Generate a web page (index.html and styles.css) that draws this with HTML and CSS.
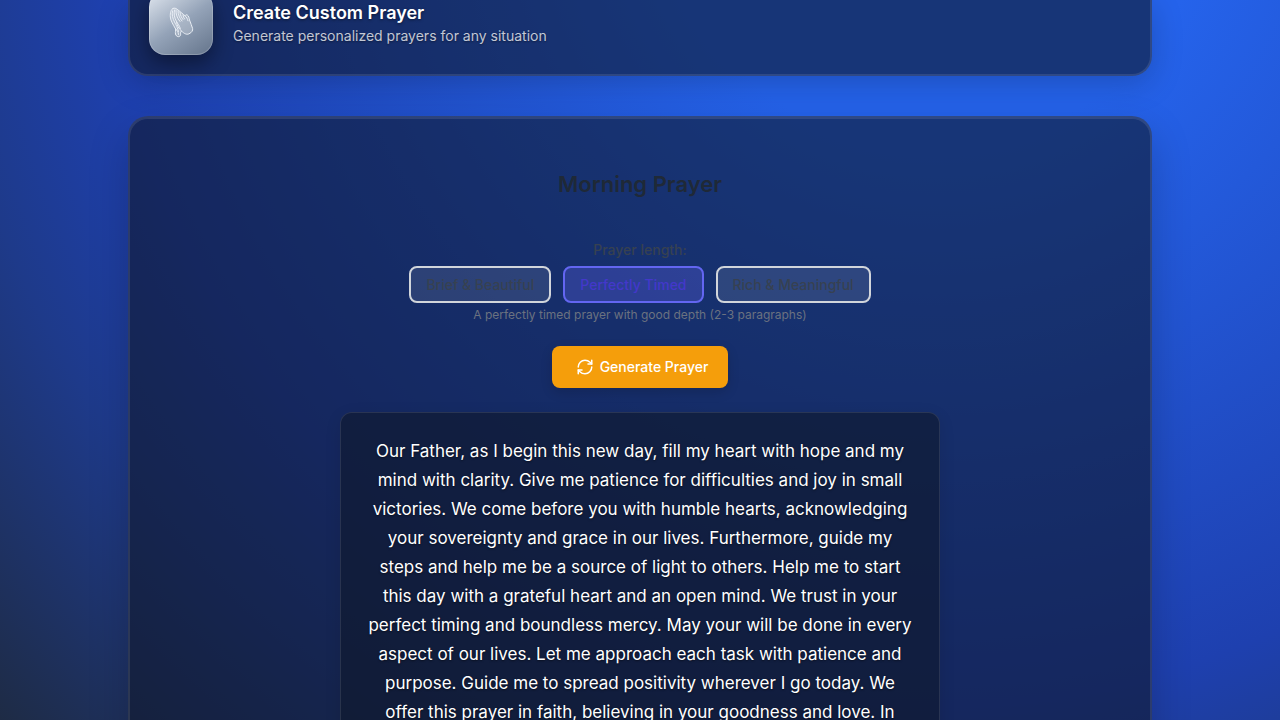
FILE: index.html
```html
<!DOCTYPE html>
<html lang="en">
<head>
<meta charset="utf-8">
<title>Morning Prayer</title>
<link rel="stylesheet" href="styles.css">
</head>
<body>
<main class="page">
  <section class="card feature">
    <div class="feature-icon">
      <svg viewBox="0 0 28 32" width="28" height="32" aria-hidden="true">
        <g fill="none" stroke="currentColor" stroke-width="1" stroke-linecap="round" stroke-linejoin="round">
          <path fill="rgba(255,255,255,.2)" d="M6 1.500C4 2 3 6 3.300 10c.3 4 3.200 8 5 11.500.8 2-.3 3.500.2 5.500.7 3 4 3.600 5 1.200.5-1.400-.6-2.600 1-4.200 2.500 2.500 5 4 7.500 2.800 3-1.400 4-3.400 3.600-5.300C25 19 23.500 16 22.500 13c-.4-1.800-.6-4-2.200-5-1.200-.6-1.600 0-2.300.8C16 7 12.500 4 10 2.200 8.500 1 7.500.8 6 1.500Z"/>
          <path d="M5.500 4c-.8 4 .2 7.500 2 11 1.600 3 3.200 6 4 9.500M7.500 3c-1 4 0 8 2 11.500 1.300 2.500 3 4 3.800 7M9 3c-.3 4 1 8 4 11.500M11 4c0 3.500 1.500 7 4 10M13 5.500c.3 2.500 1.400 5 3 7M16 8c.2 1.500.8 3 1.500 4"/>
          <path d="M9.500 14.500c.3 4 2.500 7.500 5 9.500M18 8.800c1.600 1.300 2.400 3 3 5M8.500 21.500c1.500 2 3 3.500 3 6"/>
        </g>
      </svg>
    </div>
    <div>
      <h2 class="feature-title">Create Custom Prayer</h2>
      <p class="feature-text">Generate personalized prayers for any situation</p>
    </div>
  </section>

  <section class="card prayer">
    <h1 class="prayer-title">Morning Prayer</h1>
    <div class="length" role="group" aria-labelledby="length-label">
      <span class="length-label" id="length-label">Prayer length:</span>
      <div class="length-options">
        <button class="option" type="button">Brief &amp; Beautiful</button>
        <button class="option option-selected" type="button" aria-pressed="true">Perfectly Timed</button>
        <button class="option" type="button">Rich &amp; Meaningful</button>
      </div>
      <p class="length-note">A perfectly timed prayer with good depth (2-3 paragraphs)</p>
    </div>
    <button class="generate" type="button">
      <svg viewBox="0 0 24 24" width="18" height="18" fill="none" stroke="currentColor" stroke-width="2" stroke-linecap="round" stroke-linejoin="round" aria-hidden="true"><path d="M3 12a9 9 0 0 1 9-9 9.750 9.750 0 0 1 6.740 2.740L21 8"/><path d="M21 3v5h-5"/><path d="M21 12a9 9 0 0 1-9 9 9.750 9.750 0 0 1-6.740-2.740L3 16"/><path d="M8 16H3v5"/></svg>
      Generate Prayer
    </button>
    <p class="prayer-text">Our Father, as I begin this new day, fill my heart with hope and my mind with clarity. Give me patience for difficulties and joy in small victories. We come before you with humble hearts, acknowledging your sovereignty and grace in our lives. Furthermore, guide my steps and help me be a source of light to others. Help me to start this day with a grateful heart and an open mind. We trust in your perfect timing and boundless mercy. May your will be done in every aspect of our lives. Let me approach each task with patience and purpose. Guide me to spread positivity wherever I go today. We offer this prayer in faith, believing in your goodness and love. In</p>
  </section>
</main>
</body>
</html>
```
FILE: styles.css
```css
* {
  box-sizing: border-box;
  margin: 0;
}

html {
  height: 100%;
}

body {
  height: 100%;
  overflow: hidden;
  font-family: Inter, "Open Sans", sans-serif;
  color: #fff;
  background: radial-gradient(circle at 73% -18%, #2563eb 22%, #1e40af 66%, #1e3a8a 79%, #1e293b 103%);
}

.page {
  width: 80%;
  margin: 0 auto;
  display: flex;
  flex-direction: column;
  gap: 40px;
}

.card {
  border: 2px solid rgba(255, 255, 255, 0.1);
  border-radius: 20px;
  background: rgba(15, 23, 42, 0.6);
  box-shadow: 0 8px 32px rgba(0, 0, 0, 0.2);
}

.feature {
  display: flex;
  align-items: flex-end;
  gap: 20px;
  padding: 0 19px 19px;
  border-top: 0;
  border-radius: 0 0 20px 20px;
}

.feature-icon {
  display: flex;
  align-items: center;
  justify-content: center;
  width: 64px;
  height: 64px;
  margin-top: -9px;
  border: 1px solid rgba(255, 255, 255, 0.2);
  border-radius: 16px;
  background: linear-gradient(145deg, #e2e8f0, #94a3b8 50%, #64748b);
  background-origin: border-box;
  box-shadow: 0 8px 20px rgba(0, 0, 0, 0.4);
  color: #e9eef5;
}

.feature-title {
  font-size: 18px;
  line-height: 24px;
  font-weight: 600;
  text-shadow: 0 1px 3px rgba(0, 0, 0, 0.5);
}

.feature-text {
  padding-bottom: 8px;
  font-size: 14px;
  line-height: 22px;
  color: rgba(255, 255, 255, 0.75);
  text-shadow: 0 1px 2px rgba(0, 0, 0, 0.4);
}

.prayer {
  display: flex;
  flex-direction: column;
  align-items: center;
  padding: 48px 20px;
  box-shadow: 0 16px 40px rgba(0, 0, 0, 0.2), inset 0 1px 0 rgba(255, 255, 255, 0.1);
}

.prayer-title {
  margin-bottom: 38px;
  font-size: 22px;
  line-height: 36px;
  font-weight: 600;
  color: #1f2937;
}

.length {
  display: flex;
  flex-direction: column;
  align-items: center;
}

.length-label {
  margin-bottom: 6px;
  font-size: 14px;
  line-height: 20px;
  font-weight: 500;
  color: #374151;
}

.length-options {
  display: flex;
  flex-wrap: wrap;
  justify-content: center;
  gap: 12px;
}

.option {
  padding: 8px 15px;
  border: 2px solid #d1d5db;
  border-radius: 8px;
  background: rgba(255, 255, 255, 0.1);
  color: #374151;
  font: 500 14px/17px Inter, sans-serif;
}

.option-selected {
  border-color: #6366f1;
  background: rgba(99, 102, 241, 0.3);
  color: #4338ca;
}

.length-note {
  margin-top: 4px;
  font-size: 12px;
  line-height: 16px;
  color: #6b7280;
}

.generate {
  display: flex;
  align-items: center;
  gap: 6px;
  margin: 23px 0 24px;
  padding: 12px 20px 12px 24px;
  border: 0;
  border-radius: 8px;
  background: #f59e0b;
  box-shadow: 0 4px 12px rgba(0, 0, 0, 0.15);
  color: #fff;
  font: 500 14px/18px Inter, sans-serif;
}

.prayer-text {
  max-width: 600px;
  padding: 24px;
  border: 1px solid rgba(255, 255, 255, 0.1);
  border-radius: 12px;
  background: rgba(15, 23, 42, 0.6);
  box-shadow: 0 4px 16px rgba(0, 0, 0, 0.1);
  font-size: 17px;
  line-height: 29px;
  text-align: center;
  text-shadow: 0 1px 2px rgba(0, 0, 0, 0.5);
}
```
